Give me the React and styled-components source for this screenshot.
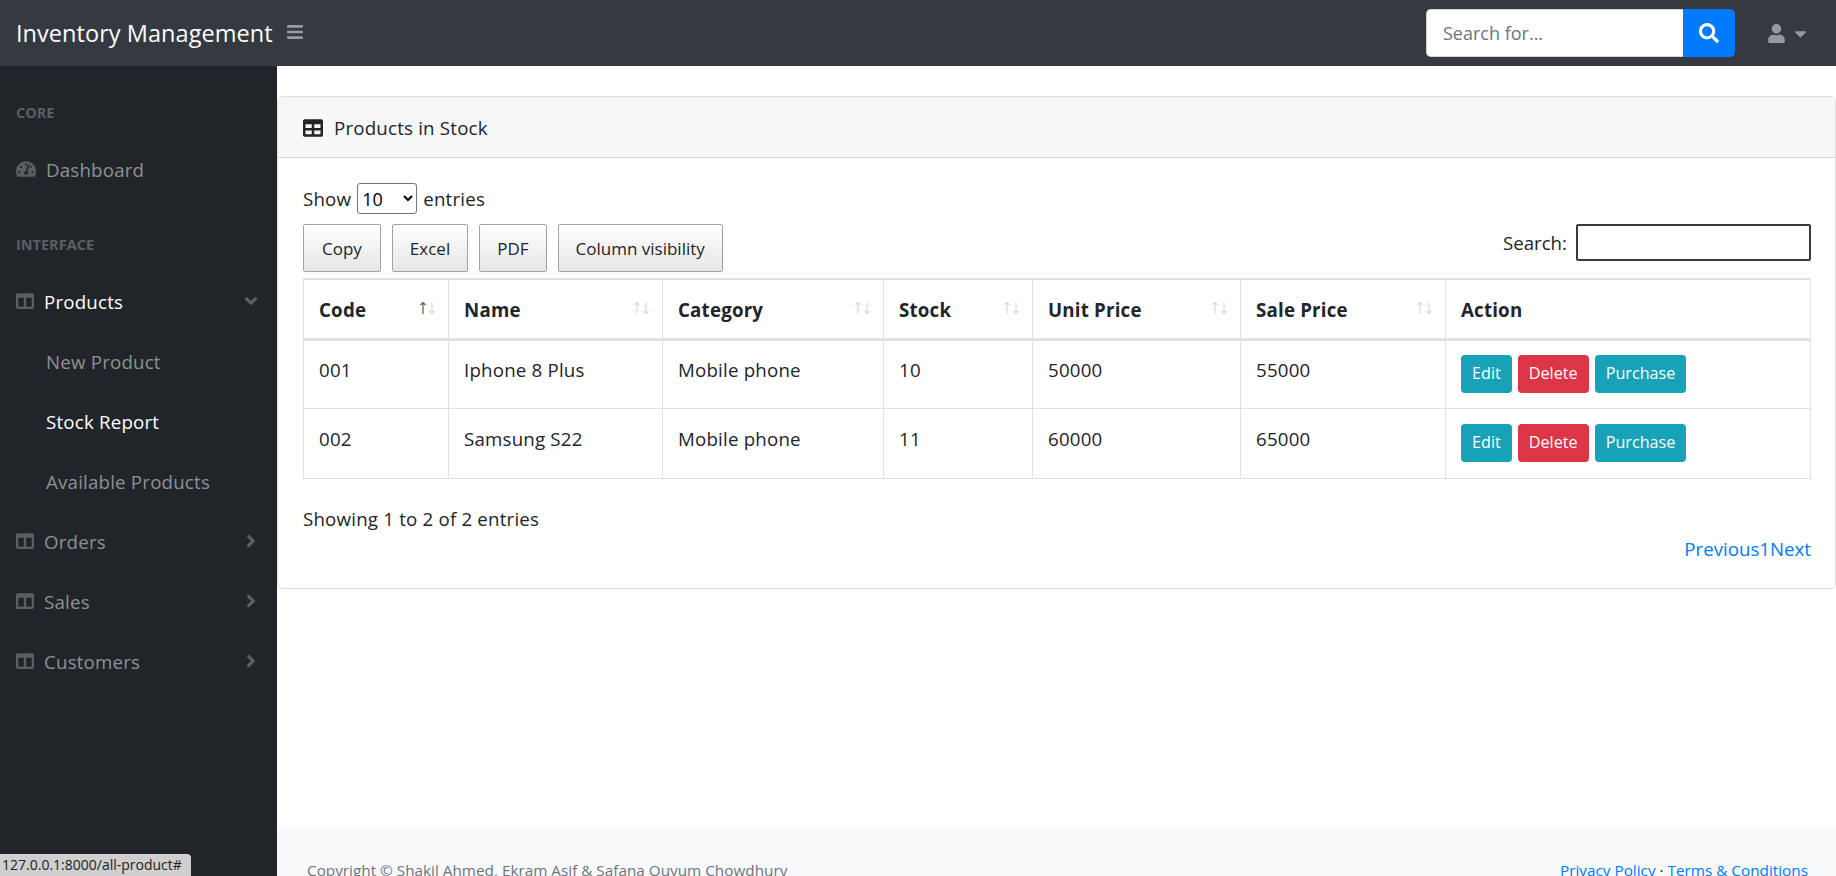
import React from 'react';
import styled, { createGlobalStyle } from 'styled-components';
import {
  FaAngleDown, FaAngleRight, FaBars, FaColumns, FaSearch, FaTable, FaTachometerAlt, FaUser, FaCaretDown,
} from 'react-icons/fa';

const Global = createGlobalStyle`
  html, body { margin: 0; padding: 0; height: 100%; overflow: hidden; }
  body {
    font-family: 'Open Sans', 'Noto Sans', sans-serif;
    font-size: 18.7px;
    letter-spacing: 0.2px;
    color: #212529;
    background: #fff;
  }
  * { box-sizing: border-box; }
`;

const Shell = styled.div`
  height: 876px;
  display: flex;
  flex-direction: column;
  overflow: hidden;
  position: relative;
`;

const TopBar = styled.header`
  height: 66px;
  flex: none;
  background: #343a40;
  display: flex;
  align-items: center;
  padding: 0 26px 0 16px;
`;

const Brand = styled.div`
  color: #fff;
  font-size: 23.5px;
  letter-spacing: 0.05px;
`;

const Toggle = styled.span`
  color: #9a9da0;
  font-size: 18px;
  display: flex;
  margin-left: 13px;
  margin-top: -2px;
`;

const SearchBox = styled.div`
  margin-left: auto;
  display: flex;
  height: 48px;
`;

const SearchInput = styled.input`
  width: 257px;
  border: 1px solid #ced4da;
  border-right: 0;
  border-radius: 5px 0 0 5px;
  padding: 0 16px;
  font: inherit;
  font-size: 18px;
  outline: none;
  &::placeholder { color: #6c757d; opacity: 1; }
`;

const SearchButton = styled.button`
  width: 52px;
  border: 0;
  border-radius: 0 5px 5px 0;
  background: #007bff;
  color: #fff;
  font-size: 20px;
  display: flex;
  align-items: center;
  justify-content: center;
`;

const UserMenu = styled.div`
  margin-left: 32px;
  display: flex;
  align-items: center;
  gap: 5px;
  color: #96999c;
  font-size: 19px;
`;

const Body = styled.div`
  flex: 1;
  min-height: 0;
  display: flex;
`;

const Sidebar = styled.nav`
  width: 277px;
  flex: none;
  background: #212529;
  padding-top: 2px;
`;

const Heading = styled.div`
  height: 72px;
  padding: 35px 16px 0;
  font-size: 14.5px;
  letter-spacing: 0;
  line-height: 20px;
  font-weight: 700;
  color: #5b5f63;
`;

const NavItem = styled.a`
  height: 60px;
  display: flex;
  align-items: center;
  padding: 0 16px 2px ${(p) => (p.$sub ? '46px' : '16px')};
  color: ${(p) => (p.$active ? '#fff' : '#8f9193')};
`;

const NavIcon = styled.span`
  display: flex;
  width: ${(p) => p.$w || 28}px;
  font-size: ${(p) => p.$size || 20}px;
  color: #5b5f63;
`;

const NavArrow = styled.span`
  display: flex;
  margin-left: auto;
  font-size: 20px;
  color: #5b5f63;
`;

const Main = styled.main`
  flex: 1;
  min-width: 0;
  display: flex;
  flex-direction: column;
`;

const Content = styled.div`
  flex: 1;
  padding-top: 30px;
`;

const Card = styled.section`
  border: 1px solid rgba(0, 0, 0, 0.125);
  border-radius: 5px;
`;

const CardHeader = styled.div`
  height: 61px;
  display: flex;
  align-items: center;
  gap: 11px;
  padding: 1px 25px 0;
  background: #f7f7f7;
  border-bottom: 1px solid rgba(0, 0, 0, 0.125);
`;

const CardBody = styled.div`
  padding: 25px 24px 27px 25px;
`;

const LengthRow = styled.div`
  display: flex;
  align-items: center;
  gap: 6px;
  height: 31px;
`;

const LengthSelect = styled.select`
  width: 60px;
  height: 31px;
  font: inherit;
  font-size: 18px;
  background: #fff;
  border: 1px solid #767676;
  border-radius: 3px;
`;

const ToolRow = styled.div`
  display: flex;
  align-items: flex-start;
  justify-content: space-between;
  margin-top: 10px;
  height: 54px;
`;

const ToolButtons = styled.div`
  display: flex;
  gap: 11px;
`;

const ToolButton = styled.button`
  height: 48px;
  padding: 0 ${(p) => p.$pad || 17}px;
  font: inherit;
  font-size: 17px;
  color: #212529;
  border: 1px solid #a3a3a3;
  border-radius: 2px;
  background: linear-gradient(to bottom, #fff 0%, #e6e6e6 100%);
`;

const TableSearch = styled.label`
  display: flex;
  align-items: center;
  gap: 9px;
  letter-spacing: 0;
`;

const TableSearchInput = styled.input`
  width: 235px;
  height: 37px;
  border: 2px solid #3b3b3b;
  border-radius: 2px;
  background: #fff;
`;

const Table = styled.table`
  width: 1507px;
  table-layout: fixed;
  border-collapse: collapse;
`;

const Th = styled.th`
  position: relative;
  height: 60px;
  padding: 2px 15px 0;
  text-align: left;
  font-weight: 700;
  border: 1px solid #dee2e6;
  border-top-width: 2px;
  border-bottom-width: 3px;
`;

const Td = styled.td`
  height: ${(p) => p.$h}px;
  padding: 0 15px 9px;
  border: 1px solid #dee2e6;
  vertical-align: middle;
`;

const SortMark = styled.svg`
  position: absolute;
  right: 12px;
  top: 21px;
  width: 17px;
  height: 14px;
`;

const Actions = styled.div`
  display: flex;
  gap: 6px;
  padding-top: 9px;
`;

const RowButton = styled.button`
  height: 38px;
  padding: 0 11px 2px;
  font: inherit;
  font-size: 16.2px;
  color: #fff;
  border: 0;
  border-radius: 4px;
  background: ${(p) => (p.$danger ? '#dc3545' : '#17a2b8')};
`;

const Info = styled.div`
  margin-top: 28px;
  height: 24px;
  line-height: 24px;
`;

const Pager = styled.div`
  margin-top: 6px;
  text-align: right;
  line-height: 24px;
  letter-spacing: 0;
  color: #007bff;
`;

const Footer = styled.footer`
  flex: none;
  height: 49px;
  background: #f8f9fa;
  padding: 31px 28px 0 30px;
  display: flex;
  justify-content: space-between;
  font-size: 15.3px;
  letter-spacing: 0;
  line-height: 24px;
  color: #6c757d;
  overflow: hidden;
`;

const FooterLink = styled.a`
  color: #007bff;
`;

const FooterDot = styled.span`
  color: #212529;
`;

const StatusTip = styled.div`
  position: absolute;
  left: 0;
  bottom: 0;
  width: 191px;
  height: 22px;
  padding-left: 2px;
  background: #cfcfcf;
  border-top-right-radius: 4px;
  font-size: 14px;
  letter-spacing: 0;
  line-height: 22px;
  color: #222;
  white-space: nowrap;
  overflow: hidden;
`;

const columns = [
  { label: 'Code', width: 145, active: true },
  { label: 'Name', width: 214 },
  { label: 'Category', width: 221 },
  { label: 'Stock', width: 149 },
  { label: 'Unit Price', width: 208 },
  { label: 'Sale Price', width: 205 },
  { label: 'Action', width: 365, plain: true },
];

const rows = [
  { code: '001', name: 'Iphone 8 Plus', category: 'Mobile phone', stock: 10, unit: 50000, sale: 55000, h: 69 },
  { code: '002', name: 'Samsung S22', category: 'Mobile phone', stock: 11, unit: 60000, sale: 65000, h: 70 },
];

const Col = styled.col`
  width: ${(p) => p.$w}px;
`;

const Sort = ({ active }) => (
  <SortMark viewBox="0 0 17 14" fill="none" strokeWidth="1.2">
    <path d="M4 13V1.5M1.5 4L4 1.5 6.5 4" stroke={active ? '#6b5a3a' : '#d9d9d9'} />
    <path d="M13 1v11.5M10.5 10l2.5 2.5 2.5-2.5" stroke="#d9d9d9" />
  </SortMark>
);

const SideLink = ({ label, arrow, active }) => (
  <NavItem $active={active}>
    <NavIcon $size={18} $w={28}><FaColumns /></NavIcon>
    {label}
    <NavArrow>{arrow === 'down' ? <FaAngleDown /> : <FaAngleRight />}</NavArrow>
  </NavItem>
);

export default function App() {
  return (
    <Shell>
      <Global />
      <TopBar>
        <Brand>Inventory Management</Brand>
        <Toggle><FaBars /></Toggle>
        <SearchBox>
          <SearchInput placeholder="Search for..." />
          <SearchButton><FaSearch /></SearchButton>
        </SearchBox>
        <UserMenu><FaUser /><FaCaretDown size={19} /></UserMenu>
      </TopBar>
      <Body>
        <Sidebar>
          <Heading>CORE</Heading>
          <NavItem>
            <NavIcon $w={30}><FaTachometerAlt /></NavIcon>
            Dashboard
          </NavItem>
          <Heading>INTERFACE</Heading>
          <SideLink label="Products" arrow="down" active />
          <NavItem $sub>New Product</NavItem>
          <NavItem $sub $active>Stock Report</NavItem>
          <NavItem $sub>Available Products</NavItem>
          <SideLink label="Orders" />
          <SideLink label="Sales" />
          <SideLink label="Customers" />
        </Sidebar>
        <Main>
          <Content>
            <Card>
              <CardHeader><FaTable size={20} /> Products in Stock</CardHeader>
              <CardBody>
                <LengthRow>
                  Show
                  <LengthSelect defaultValue="10">
                    <option>10</option>
                    <option>25</option>
                    <option>50</option>
                  </LengthSelect>
                  entries
                </LengthRow>
                <ToolRow>
                  <ToolButtons>
                    <ToolButton $pad={18}>Copy</ToolButton>
                    <ToolButton>Excel</ToolButton>
                    <ToolButton>PDF</ToolButton>
                    <ToolButton>Column visibility</ToolButton>
                  </ToolButtons>
                  <TableSearch>Search: <TableSearchInput /></TableSearch>
                </ToolRow>
                <Table>
                  <colgroup>
                    {columns.map((c) => <Col key={c.label} $w={c.width} />)}
                  </colgroup>
                  <thead>
                    <tr>
                      {columns.map((c) => (
                        <Th key={c.label}>
                          {c.label}
                          {!c.plain && <Sort active={c.active} />}
                        </Th>
                      ))}
                    </tr>
                  </thead>
                  <tbody>
                    {rows.map((r) => (
                      <tr key={r.code}>
                        <Td $h={r.h}>{r.code}</Td>
                        <Td $h={r.h}>{r.name}</Td>
                        <Td $h={r.h}>{r.category}</Td>
                        <Td $h={r.h}>{r.stock}</Td>
                        <Td $h={r.h}>{r.unit}</Td>
                        <Td $h={r.h}>{r.sale}</Td>
                        <Td $h={r.h}>
                          <Actions>
                            <RowButton>Edit</RowButton>
                            <RowButton $danger>Delete</RowButton>
                            <RowButton>Purchase</RowButton>
                          </Actions>
                        </Td>
                      </tr>
                    ))}
                  </tbody>
                </Table>
                <Info>Showing 1 to 2 of 2 entries</Info>
                <Pager>Previous1Next</Pager>
              </CardBody>
            </Card>
          </Content>
          <Footer>
            <div>Copyright © Shakil Ahmed, Ekram Asif &amp; Safana Quyum Chowdhury</div>
            <div>
              <FooterLink>Privacy Policy</FooterLink> <FooterDot>·</FooterDot> <FooterLink>Terms &amp; Conditions</FooterLink>
            </div>
          </Footer>
        </Main>
      </Body>
      <StatusTip>127.0.0.1:8000/all-product#</StatusTip>
    </Shell>
  );
}
